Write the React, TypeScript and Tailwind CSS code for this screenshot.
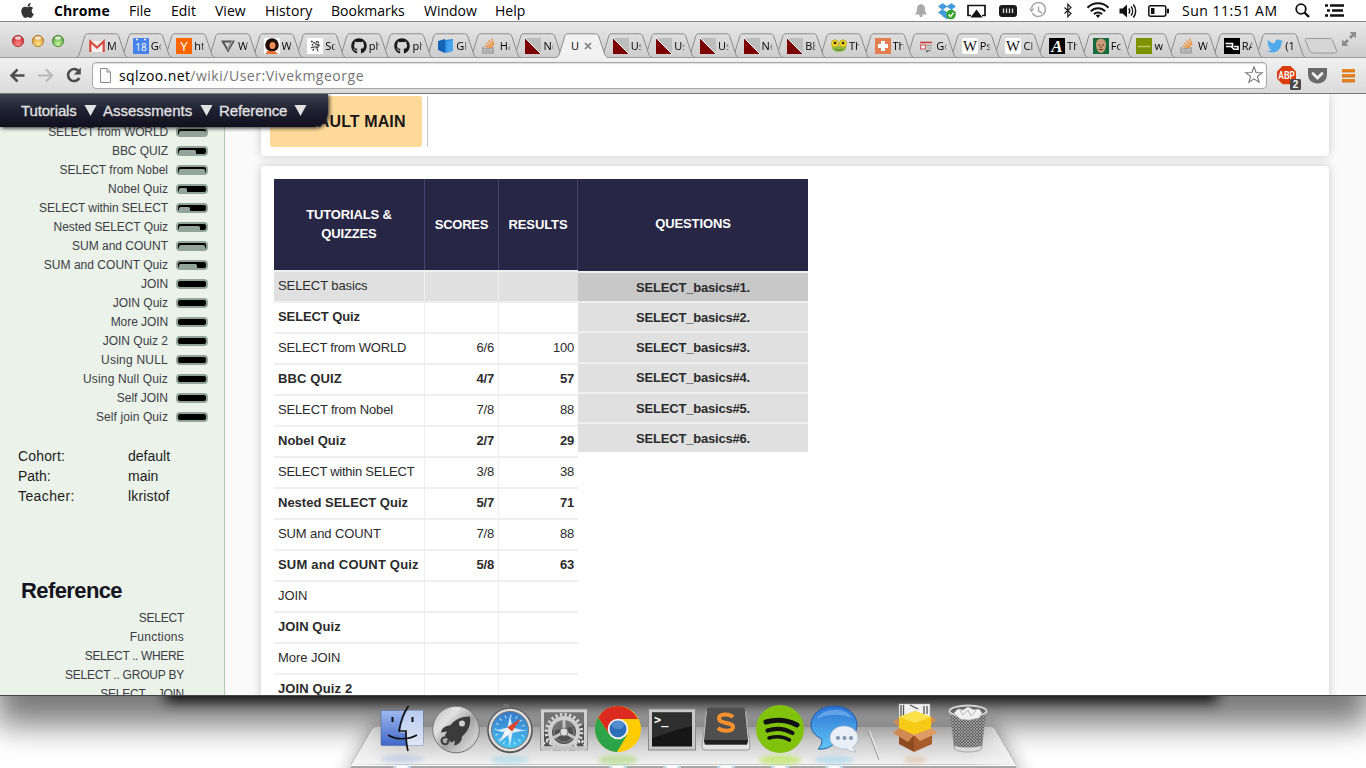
import React from "react";
import { FaApple, FaGithub, FaTwitter } from "react-icons/fa";

/* ---------- Menu bar ---------- */

function StatusIcons() {
  return (
    <svg width="260" height="21" viewBox="912 0 260 21" className="shrink-0">
      <g fill="#a9a9a9">
        <path d="M921 4c-3 .6-4 2.500-4 5 0 3-1 4.500-2.500 5.500h13C926 13.500 925 12 925 9c0-2.500-1-4.400-4-5z" />
        <circle cx="921" cy="15.600" r="1.700" />
      </g>
      <g fill="#3f9de0" stroke="#2b7fc4" strokeWidth=".5">
        <path d="M942.500 3.500l4.500 3-4.500 3-4-3.100zM951.500 3.500l-4.500 3 4.500 3 4-3.100zM942.500 9.500l4.500 3-4.500 3-4-3.100zM951.500 9.500l-4.500 3 4.500 3 4-3.100z" />
        <path d="M942.500 16l4.500-2.800 4.500 2.800-4.500 3z" />
      </g>
      <circle cx="951" cy="14.500" r="4.800" fill="#35a52c" />
      <path d="M948.600 14.600l1.900 2 3-3.800" fill="none" stroke="#fff" strokeWidth="1.400" />
      <path d="M971 15.500h-3V5.500h17v10h-3" fill="none" stroke="#111" strokeWidth="1.700" />
      <path d="M976.500 9.500l6 8h-12z" fill="#111" />
      <rect x="999" y="5" width="18" height="12" rx="3" fill="#1c1c1c" />
      <path d="M1003.500 8.500v4.500M1006.500 8.500v4.500M1009.500 8.500v4.500M1012.500 8.500v4.500" stroke="#ddd" strokeWidth="1.300" />
      <path d="M1031.500 8a7 7 0 1 1 .8 5" fill="none" stroke="#a9a9a9" strokeWidth="1.500" />
      <path d="M1029 8.500h5.500l-3 4z" fill="#a9a9a9" />
      <path d="M1038.500 6.500v4.500l3.500 2" fill="none" stroke="#a9a9a9" strokeWidth="1.500" />
      <path d="M1064.500 7.500l6.500 6-3.200 3.200V4.300l3.200 3.200-6.500 6" fill="none" stroke="#222" strokeWidth="1.200" />
      <g fill="none" stroke="#111" strokeWidth="2">
        <path d="M1087.500 7.800a14.500 14.500 0 0 1 21 0" />
        <path d="M1090.800 11.200a10 10 0 0 1 14.400 0" />
        <path d="M1094 14.300a5.600 5.600 0 0 1 8 0" />
      </g>
      <path d="M1095.800 15.500l2.200 2.500 2.200-2.500a3.200 3.200 0 0 0-4.400 0z" fill="#111" />
      <path d="M1119.500 8.500h3l4.500-4v13l-4.500-4h-3z" fill="#111" />
      <g fill="none" stroke="#111" strokeWidth="1.400">
        <path d="M1128.800 8.500a4 4 0 0 1 0 5M1131 6.500a7 7 0 0 1 0 9M1133.300 4.500a10 10 0 0 1 0 13" />
      </g>
      <rect x="1148.800" y="5.800" width="17" height="10.500" rx="2" fill="none" stroke="#111" strokeWidth="1.500" />
      <rect x="1151" y="8" width="3.500" height="6" fill="#111" />
      <path d="M1167.500 9h1v4h-1z" stroke="#111" fill="#111" />
    </svg>
  );
}

function MenuBar() {
  return (
    <header className="flex h-[21px] shrink-0 items-center bg-white pl-[19px] font-['Open_Sans','Noto_Sans',sans-serif] text-[14px] leading-[21px] text-black">
      <FaApple className="mr-[18px] h-[17px] w-[17px] shrink-0 text-[#333]" />
      <nav className="flex w-[858px] shrink-0">
        <span className="w-[75px] font-bold tracking-[0.1px]">Chrome</span>
        <span className="w-[42px]">File</span>
        <span className="w-[44px]">Edit</span>
        <span className="w-[50px]">View</span>
        <span className="w-[66px] tracking-[0.1px]">History</span>
        <span className="w-[93px]">Bookmarks</span>
        <span className="w-[71px]">Window</span>
        <span>Help</span>
      </nav>
      <StatusIcons />
      <span className="ml-[10px] w-[112px] shrink-0 whitespace-nowrap tracking-[0.52px]">Sun 11:51 AM</span>
      <svg width="54" height="21" viewBox="1294 0 54 21" className="shrink-0">
        <circle cx="1301" cy="9" r="4.800" fill="none" stroke="#111" strokeWidth="1.800" />
        <path d="M1304.500 12.500l4.500 4.500" stroke="#111" strokeWidth="2.400" />
        <path d="M1325 5.500h3M1330 5.500h14M1327 10.500h3M1332 10.500h11M1325 15.500h3M1330 15.500h14" stroke="#111" strokeWidth="2.600" />
      </svg>
    </header>
  );
}

/* ---------- Tabs ---------- */

type Kind =
  | "gmail" | "cal" | "hn" | "tri" | "face" | "sketch" | "github" | "blue" | "so" | "zoo" | "none"
  | "frog" | "plus" | "news" | "wiki" | "a" | "man" | "green" | "ra" | "twitter";

function Favicon({ kind }: { kind: Kind }) {
  if (kind === "github") return <FaGithub className="h-4 w-4 shrink-0 text-[#1b1b1b]" />;
  if (kind === "twitter") return <FaTwitter className="h-4 w-4 shrink-0 text-[#4fa9ea]" />;
  return (
    <svg width="16" height="16" viewBox="0 0 16 16" className="shrink-0">
      {kind === "gmail" && (
        <>
          <path d="M1 3h14v11H1z" fill="#f4f0ef" />
          <path d="M1.300 14V3.500L8 9.500l6.700-6V14" fill="none" stroke="#d8493d" strokeWidth="2.200" />
        </>
      )}
      {kind === "cal" && (
        <>
          <rect width="16" height="16" rx="1" fill="#4582ec" />
          <path d="M3 1.500h2M11 1.500h2" stroke="#fff" strokeWidth="1.500" />
          <text x="8" y="13" textAnchor="middle" fontSize="10" fill="#fff" fontFamily="Open Sans">18</text>
        </>
      )}
      {kind === "hn" && (
        <>
          <rect width="16" height="16" fill="#f60" />
          <text x="8" y="12.500" textAnchor="middle" fontSize="12" fill="#fff" fontFamily="Liberation Sans">Y</text>
        </>
      )}
      {kind === "tri" && (
        <>
          <path d="M1 2.500h14L8 14.500z" fill="#555" />
          <path d="M4.500 4.500h6L7.500 10z" fill="#d4d4d4" />
          <path d="M12.500 2.500L7.500 12" stroke="#d4d4d4" strokeWidth=".8" />
        </>
      )}
      {kind === "face" && (
        <>
          <rect width="16" height="16" fill="#fff" />
          <circle cx="8" cy="7" r="6.800" fill="#210c08" />
          <ellipse cx="8.500" cy="7.500" rx="3" ry="3.500" fill="#ec8f55" />
          <path d="M2 16c0-3 2-4 4-3s5-1 8 3z" fill="#ef6d2e" />
        </>
      )}
      {kind === "sketch" && (
        <>
          <rect width="16" height="16" fill="#fff" />
          <path d="M4 3l3 2 4-2 1 5-2 2 1 4M5 6l2 3-1 4M9 5v6M4 10l2-1M10 7h2" fill="none" stroke="#333" strokeWidth="1.300" strokeDasharray="2 .8" />
        </>
      )}
      {kind === "blue" && (
        <>
          <path d="M0 3l7-2v14l-7-3z" fill="#1764b4" />
          <path d="M7 2l8-1v11l-8 3z" fill="#2e8bdd" />
          <path d="M9 4l6-2v11l-6 2z" fill="#49a5ee" />
        </>
      )}
      {kind === "so" && (
        <>
          <path d="M1 9v6h10V9" fill="none" stroke="#8b8b8b" strokeWidth="1.200" />
          <path d="M2.500 12.800h7M2.500 10.500h7" stroke="#999" strokeWidth="1.300" />
          <path d="M2.800 8l7 1.500M4 5l6.300 3.300M6.500 2.500l4.800 5M9.500.5l2.500 6.500" stroke="#f0913a" strokeWidth="1.300" />
        </>
      )}
      {kind === "zoo" && (
        <>
          <rect width="16" height="16" fill="#bdbdbd" />
          <path d="M0 0l16 16H0z" fill="#7d0000" />
          <path d="M0 0l16 16" stroke="#fff" strokeWidth="1" />
        </>
      )}
      {kind === "frog" && (
        <>
          <path d="M1 8h14c1 3-2 6-7 6s-8-3-7-6z" fill="#8dbb45" />
          <circle cx="4" cy="5.500" r="3.700" fill="#f0d324" stroke="#a99b21" strokeWidth=".6" />
          <circle cx="12" cy="5.500" r="3.700" fill="#f0d324" stroke="#a99b21" strokeWidth=".6" />
          <circle cx="4" cy="5" r="1.300" fill="#222" />
          <circle cx="12" cy="5" r="1.300" fill="#222" />
          <path d="M4 11c2 1.500 6 1.500 8 0" fill="none" stroke="#557a21" />
        </>
      )}
      {kind === "plus" && (
        <>
          <rect width="16" height="16" fill="#e27e4f" />
          <path d="M8 3v10M3 8h10" stroke="#fff" strokeWidth="4" />
        </>
      )}
      {kind === "news" && (
        <>
          <path d="M2 4.500h12" stroke="#c33" strokeWidth="1.500" />
          <path d="M2 7.500h12M9 10h5M9 12.500h4" stroke="#999" strokeWidth="1.200" />
          <rect x="2.500" y="7" width="5" height="4" fill="#eee" stroke="#c55" />
          <path d="M8 15l5-3H8z" fill="#777" />
        </>
      )}
      {kind === "wiki" && (
        <>
          <rect width="16" height="16" rx="2" fill="#fff" />
          <text x="8" y="12.500" textAnchor="middle" fontSize="14" textLength="14" lengthAdjust="spacingAndGlyphs" fill="#111" fontFamily="Liberation Serif">W</text>
        </>
      )}
      {kind === "a" && (
        <>
          <rect width="16" height="16" fill="#000" />
          <text x="8" y="14" textAnchor="middle" fontSize="17" fontStyle="italic" fontWeight="bold" fill="#fff" fontFamily="Liberation Serif">A</text>
        </>
      )}
      {kind === "man" && (
        <>
          <rect width="16" height="16" fill="#156b3d" />
          <path d="M3 6c0-7 10-7 10 0 0 5-2 9-5 9S3 11 3 6z" fill="#c79c76" />
          <path d="M5 7h2M9 7h2M6 11.500h4M8 8v2" stroke="#5c3a25" strokeWidth="1" />
        </>
      )}
      {kind === "green" && (
        <>
          <rect width="16" height="16" fill="#7d9200" />
          <path d="M2 8.500h12" stroke="#cfdc8a" strokeWidth="1.500" strokeDasharray="2 .6" />
        </>
      )}
      {kind === "ra" && (
        <>
          <rect width="16" height="16" fill="#000" />
          <path d="M1.500 5.500h7v3H2M7 8.500l3 2.800h4V8.500h-4" fill="none" stroke="#fff" strokeWidth="1.600" />
        </>
      )}
    </svg>
  );
}

const tabs: { kind: Kind; label: string }[] = [
  { kind: "gmail", label: "M" },
  { kind: "cal", label: "Go" },
  { kind: "hn", label: "ht" },
  { kind: "tri", label: "W" },
  { kind: "face", label: "Wi" },
  { kind: "sketch", label: "Sc" },
  { kind: "github", label: "ph" },
  { kind: "github", label: "ph" },
  { kind: "blue", label: "GF" },
  { kind: "so", label: "Ha" },
  { kind: "zoo", label: "No" },
  { kind: "none", label: "U" },
  { kind: "zoo", label: "Us" },
  { kind: "zoo", label: "Us" },
  { kind: "zoo", label: "Us" },
  { kind: "zoo", label: "No" },
  { kind: "zoo", label: "BE" },
  { kind: "frog", label: "Th" },
  { kind: "plus", label: "Th" },
  { kind: "news", label: "Go" },
  { kind: "wiki", label: "Ps" },
  { kind: "wiki", label: "Cl" },
  { kind: "a", label: "Th" },
  { kind: "man", label: "Fc" },
  { kind: "green", label: "w" },
  { kind: "so", label: "W" },
  { kind: "ra", label: "RA" },
  { kind: "twitter", label: "(1" },
];

function Tab({ kind, label, order }: { kind: Kind; label: string; order: number }) {
  const active = kind === "none";
  return (
    <div className="relative h-[25px] w-[43.65px] shrink-0" style={{ zIndex: active ? 50 : order }}>
      <svg className="absolute top-0 left-0" width="54" height="25" viewBox="0 0 54 25">
        <path
          d="M0 24.500C2.500 24 3 22 4 19L8.500 4C9.200 1.500 10 .8 12 .8H39.500C41.500 .8 42.300 1.500 43 4L48 19C49 22 49.500 24 52 24.500"
          fill={active ? "#f1f1f1" : "url(#tabFill)"}
          stroke="#8c8c8c"
        />
        <path d="M1.500 24.500h49" stroke={active ? "#f1f1f1" : "#9b9b9b"} strokeWidth={active ? 1.5 : 1} />
      </svg>
      <div className="relative flex h-[25px] items-center pt-px pl-[13px]">
        {active ? (
          <>
            <span className="ml-[2px] w-[9px] font-['Open_Sans','Noto_Sans',sans-serif] text-[11px] leading-[16px]">U</span>
            <svg width="8" height="8" viewBox="0 0 8 8" className="ml-[4px]">
              <path d="M1 1l6 6M7 1L1 7" stroke="#808080" strokeWidth="1.700" />
            </svg>
          </>
        ) : (
          <>
            <Favicon kind={kind} />
            <span className="ml-[2px] w-[11px] shrink-0 overflow-hidden [mask-image:linear-gradient(to_right,#000_70%,transparent)] font-['Open_Sans','Noto_Sans',sans-serif] text-[11px] leading-[16px] whitespace-nowrap text-black">
              {label}
            </span>
          </>
        )}
      </div>
    </div>
  );
}

function TabStrip() {
  return (
    <div className="flex h-[37px] shrink-0 items-end border-t border-[#858585] bg-linear-to-b from-[#e9e9e9] to-[#cbcbcb] shadow-[inset_0_-1px_#9b9b9b]">
      <svg width="76" height="36" viewBox="0 0 76 36" className="shrink-0">
        <defs>
          <linearGradient id="tabFill" x1="0" y1="0" x2="0" y2="1">
            <stop offset="0" stopColor="#dedede" />
            <stop offset="1" stopColor="#cdcdcd" />
          </linearGradient>
          <radialGradient id="lr" cx=".5" cy=".75" r=".7"><stop offset="0" stopColor="#ff8b88" /><stop offset="1" stopColor="#c51f26" /></radialGradient>
          <radialGradient id="ly" cx=".5" cy=".75" r=".7"><stop offset="0" stopColor="#ffe48a" /><stop offset="1" stopColor="#d68e25" /></radialGradient>
          <radialGradient id="lg" cx=".5" cy=".75" r=".7"><stop offset="0" stopColor="#c9f5a3" /><stop offset="1" stopColor="#44992f" /></radialGradient>
        </defs>
        <circle cx="18" cy="19" r="5.700" fill="url(#lr)" stroke="#a03535" strokeWidth=".8" />
        <circle cx="38" cy="19" r="5.700" fill="url(#ly)" stroke="#a5742b" strokeWidth=".8" />
        <circle cx="58" cy="19" r="5.700" fill="url(#lg)" stroke="#4c8238" strokeWidth=".8" />
        <ellipse cx="18" cy="16" rx="3.200" ry="1.700" fill="#fff" opacity=".75" />
        <ellipse cx="38" cy="16" rx="3.200" ry="1.700" fill="#fff" opacity=".75" />
        <ellipse cx="58" cy="16" rx="3.200" ry="1.700" fill="#fff" opacity=".75" />
      </svg>
      <div className="relative flex">
        {tabs.map((t, i) => (
          <Tab key={i} kind={t.kind} label={t.label} order={40 - i} />
        ))}
      </div>
      <svg width="68" height="36" viewBox="1298 22 68 36" className="shrink-0">
        <path d="M1307 38.500h22c2 0 3 .5 3.800 2.500l3.500 9c.8 2 .2 3-1.800 3h-21c-2 0-3-.5-3.800-2.500l-4-9c-.8-2-.5-3 1.300-3z" fill="#d6d6d6" stroke="#999" />
        <path d="M1349.500 32h6.500v6.500l-2.200-2.200-2.800 2.800-2-2 2.800-2.800zM1348.500 46h-6.500v-6.500l2.200 2.200 2.800-2.800 2 2-2.800 2.800z" fill="#8c8c8c" />
      </svg>
    </div>
  );
}

function Toolbar() {
  return (
    <div className="flex h-[36px] shrink-0 items-center border-b border-[#777] bg-linear-to-b from-[#f1f1f1] to-[#dadada]">
      <svg width="92" height="35" viewBox="0 58 92 35" className="shrink-0">
        <path d="M24.500 75.500H12M17.500 69.500l-6 6 6 6" fill="none" stroke="#4d4d4d" strokeWidth="2.500" />
        <path d="M38 75.500h13M46 69.500l6 6-6 6" fill="none" stroke="#b9b9b9" strokeWidth="2.200" />
        <path d="M78.500 71a6 6 0 1 0 .8 7" fill="none" stroke="#4d4d4d" strokeWidth="2.600" />
        <path d="M80.800 67.500v7h-7z" fill="#4d4d4d" />
      </svg>
      <div className="mb-[1px] flex h-[27px] w-[1175px] shrink-0 items-center rounded-[4px] border border-[#a9a9a9] bg-white shadow-[inset_0_1px_1px_#ddd]">
        <svg width="11" height="15" viewBox="0 0 11 15" className="ml-[7px] shrink-0">
          <path d="M.5.5H7L10.500 4V14.500H.5z M7 .5V4h3.500" fill="#fafafa" stroke="#8c8c8c" />
        </svg>
        <span className="ml-[8px] flex-1 pt-px font-['Open_Sans','Noto_Sans',sans-serif] text-[14px] leading-[20px] text-[#757575]">
          <span className="tracking-[0.4px] text-black">sqlzoo.net</span>
          <span className="tracking-[0.52px]">/wiki/User:Vivekmgeorge</span>
        </span>
        <svg width="20" height="20" viewBox="0 0 20 20" className="mr-[2px] shrink-0">
          <path d="M10 1.800l2.100 5.700 6.100.2-4.800 3.700 1.700 5.800L10 13.800l-5.100 3.400 1.700-5.800L1.800 7.700l6.100-.2z" fill="#fff" stroke="#777" strokeWidth="1.100" />
        </svg>
      </div>
      <svg width="99" height="35" viewBox="1267 58 99 35" className="shrink-0">
        <path d="M1282.500 66h8l5.500 5.500v7l-5.500 5.800h-8l-5.500-5.800v-7z" fill="#dc3c0a" />
        <text x="1286.500" y="79" textAnchor="middle" fontSize="10" fontWeight="bold" textLength="16.500" lengthAdjust="spacingAndGlyphs" fill="#fff" fontFamily="Liberation Sans">ABP</text>
        <rect x="1290" y="79" width="11" height="11" rx="1.500" fill="#484848" />
        <text x="1295.500" y="88.300" textAnchor="middle" fontSize="10" fontWeight="bold" fill="#fff" fontFamily="Liberation Sans">2</text>
        <path d="M1308 68h19v6c0 6-4 9.500-9.500 9.500s-9.500-3.500-9.500-9.500z" fill="#6a6a6a" />
        <path d="M1313 73.500l4.500 4.500 4.500-4.500" fill="none" stroke="#eee" strokeWidth="2.800" strokeLinecap="round" />
        <path d="M1342 70.500h13M1342 75.500h13M1342 80.500h13" stroke="#e8831d" strokeWidth="3" />
        <path d="M1342 72h13M1342 77h13M1342 82h13" stroke="#b96412" strokeWidth=".7" />
      </svg>
    </div>
  );
}

/* ---------- Page ---------- */

const progress: [string, number, string][] = [
  ["SELECT from WORLD", 27, "tracking-[-0.12px]"],
  ["BBC QUIZ", 17, "tracking-[-0.08px]"],
  ["SELECT from Nobel", 26, "tracking-[0px]"],
  ["Nobel Quiz", 8, "tracking-[0.07px]"],
  ["SELECT within SELECT", 11, "tracking-[-0.08px]"],
  ["Nested SELECT Quiz", 21, "tracking-[-0.08px]"],
  ["SUM and COUNT", 26, "tracking-[0px]"],
  ["SUM and COUNT Quiz", 18, "tracking-[0.02px]"],
  ["JOIN", 0, "tracking-[-0.08px]"],
  ["JOIN Quiz", 0, "tracking-[0px]"],
  ["More JOIN", 0, "tracking-[-0.08px]"],
  ["JOIN Quiz 2", 0, "tracking-[0px]"],
  ["Using NULL", 0, "tracking-[0.22px]"],
  ["Using Null Quiz", 0, "tracking-[0.15px]"],
  ["Self JOIN", 0, "tracking-[-0.02px]"],
  ["Self join Quiz", 0, "tracking-[0.1px]"],
];

function Sidebar() {
  return (
    <aside className="h-[601px] w-[225px] shrink-0 overflow-hidden border-r border-[#b5c9b5] bg-[#eaf2ea] pt-[28px]">
      <ul className="pr-[16px]">
        {progress.map(([name, w, tracking]) => (
          <li key={name} className="flex h-[19px] items-center justify-end text-[12px] text-[#3c3c44]">
            <span className={tracking}>{name}</span>
            <span className="ml-[8px] h-[10px] w-[32px] rounded-[4px] border-2 border-[#93a59a] bg-black">
              <span className="mt-[2px] ml-px block h-[5px] rounded-[1.500px] bg-[#93a59a]" style={{ width: w }} />
            </span>
          </li>
        ))}
      </ul>
      <dl className="mt-[20px] grid grid-cols-[110px_1fr] pl-[18px] text-[14px] leading-[20px] text-[#1c1c1c]">
        <dt className="tracking-[0.15px]">Cohort:</dt>
        <dd>default</dd>
        <dt>Path:</dt>
        <dd>main</dd>
        <dt className="tracking-[0.4px]">Teacher:</dt>
        <dd className="tracking-[0.15px]">lkristof</dd>
      </dl>
      <h3 className="mt-[71px] pl-[21px] text-[22px] leading-[28px] font-bold tracking-[-0.6px] text-[#14141f]">Reference</h3>
      <ul className="mt-[4px] pr-[40px] text-right text-[12px] leading-[19px] text-[#3c3c44]">
        <li className="tracking-[-0.25px]">SELECT</li>
        <li className="tracking-[0.25px]">Functions</li>
        <li className="tracking-[-0.35px]">SELECT .. WHERE</li>
        <li className="tracking-[-0.22px]">SELECT .. GROUP BY</li>
        <li className="tracking-[-0.25px]">SELECT .. JOIN</li>
      </ul>
    </aside>
  );
}

const rows: [string, string, string, string][] = [
  ["SELECT basics", "", "", "tracking-[-0.1px]"],
  ["SELECT Quiz", "", "", "tracking-[-0.1px]"],
  ["SELECT from WORLD", "6/6", "100", "tracking-[-0.23px]"],
  ["BBC QUIZ", "4/7", "57", "tracking-[0.12px]"],
  ["SELECT from Nobel", "7/8", "88", "tracking-[-0.15px]"],
  ["Nobel Quiz", "2/7", "29", "tracking-[0px]"],
  ["SELECT within SELECT", "3/8", "38", "tracking-[-0.25px]"],
  ["Nested SELECT Quiz", "5/7", "71", "tracking-[0px]"],
  ["SUM and COUNT", "7/8", "88", "tracking-[-0.1px]"],
  ["SUM and COUNT Quiz", "5/8", "63", "tracking-[0.2px]"],
  ["JOIN", "", "", "tracking-[-0.1px]"],
  ["JOIN Quiz", "", "", "tracking-[0.08px]"],
  ["More JOIN", "", "", "tracking-[-0.05px]"],
  ["JOIN Quiz 2", "", "", "tracking-[0.12px]"],
];

function ScoreTable() {
  return (
    <div className="w-[304px] shrink-0">
      <div className="grid h-[91px] grid-cols-[150px_74px_80px] bg-[#282645] text-center text-[13px] leading-[19px] font-bold text-white">
        <div className="px-6 pt-[26px] tracking-[-0.15px]">
          TUTORIALS & <span className="tracking-[-0.15px]">QUIZZES</span>
        </div>
        <div className="flex items-center justify-center border-l border-[#45436b] tracking-[-0.25px]">SCORES</div>
        <div className="flex items-center justify-center border-x border-[#45436b] tracking-[-0.05px]">
          <span className="tracking-[-0.1px]">RESULTS</span>
        </div>
      </div>
      {rows.map(([name, score, result, tracking], i) => (
        <div
          key={name}
          className={`grid h-[31px] grid-cols-[150px_74px_80px] border-t-2 border-[#efefef] text-[13px] leading-[27px] whitespace-nowrap text-[#2b2b2b] ${i === 0 ? "bg-[#e0e0e0]" : ""} ${i % 2 ? "font-bold" : ""}`}
        >
          <div className={`pl-[4px] ${tracking}`}>{name}</div>
          <div className="border-l border-[#efefef] pr-[4px] text-right tracking-[-0.15px]">{score}</div>
          <div className="border-l border-[#efefef] pr-[4px] text-right tracking-[-0.2px]">{result}</div>
        </div>
      ))}
    </div>
  );
}

function Questions() {
  return (
    <div className="w-[230px] shrink-0">
      <div className="flex h-[92px] items-center justify-center bg-[#282645] pb-[3px] text-[13px] font-bold tracking-[-0.12px] text-white">QUESTIONS</div>
      {[1, 2, 3, 4, 5, 6].map((n) => (
        <div
          key={n}
          className={`flex h-[30.200px] items-center justify-center border-t-2 border-[#efefef] pt-px text-[13px] font-bold tracking-[-0.2px] text-[#2b2b2b] ${n === 1 ? "bg-[#c8c8c8]" : "bg-[#e0e0e0]"}`}
        >
          SELECT_basics#{n}.
        </div>
      ))}
    </div>
  );
}

function Page() {
  return (
    <main className="relative flex h-[601px] shrink-0 overflow-hidden bg-[#fafafa] font-['Liberation_Sans',Arial,sans-serif]">
      <Sidebar />
      <div className="ml-[36px] flex w-[1068px] shrink-0 flex-col gap-[10px]">
        <section className="flex h-[62px] shrink-0 rounded-b-[4px] bg-white pt-[2px] pl-[9px] shadow-[0_0_10px_#c8c8c8]">
          <div className="flex h-[51px] w-[152px] items-center justify-center rounded-[3px] bg-[#fed998] pt-px text-[16px] font-bold text-[#1b1717]">
            <span className="tracking-[0.1px]">DEFAULT MAIN</span>
          </div>
          <div className="ml-[5px] h-[51px] w-px bg-[#c8c8c8]" />
        </section>
        <section className="flex h-[560px] shrink-0 items-start rounded-t-[4px] bg-white pt-[13px] pl-[13px] shadow-[0_0_10px_#c8c8c8]">
          <ScoreTable />
          <Questions />
        </section>
      </div>
      <nav className="absolute top-0 left-0 flex h-[33px] w-[328px] items-center rounded-br-[14px] bg-linear-to-b from-[#3b434f] via-[#1f2030] to-[#12101f] pt-px pl-[21px] text-[15px] text-[#e2e2e2] shadow-[1px_1px_4px_#222]">
        {[
          ["Tutorials", "w-[64px] tracking-[-0.15px]"],
          ["Assessments", "w-[98px] tracking-[0px]"],
          ["Reference", "w-[76px] tracking-[-0.1px]"],
        ].map(([label, w]) => (
          <span key={label} className="flex items-center">
            <span className={`${w} [-webkit-text-stroke:0.3px_#e2e2e2]`}>{label}</span>
            <svg width="12" height="11" viewBox="0 0 12 11" className="mr-[6px] mb-[2px] -ml-px w-[13px]">
              <path d="M0 0h12L6 11z" fill="#e2e2e2" />
            </svg>
          </span>
        ))}
      </nav>
    </main>
  );
}

/* ---------- Desktop and dock ---------- */

function Backdrop() {
  return (
    <svg className="absolute inset-0" width="1366" height="73" viewBox="0 695 1366 73">
      <defs>
        <filter id="b16" filterUnits="userSpaceOnUse" x="-100" y="500" width="1600" height="400"><feGaussianBlur stdDeviation="16" /></filter>
        <filter id="b7" filterUnits="userSpaceOnUse" x="-100" y="500" width="1600" height="400"><feGaussianBlur stdDeviation="7" /></filter>
        <filter id="b12" filterUnits="userSpaceOnUse" x="-100" y="500" width="1600" height="400"><feGaussianBlur stdDeviation="11" /></filter>
        <filter id="glow" filterUnits="userSpaceOnUse" x="340" y="740" width="700" height="40"><feGaussianBlur stdDeviation="2" /></filter>
        <linearGradient id="shelf" x1="0" y1="0" x2="0" y2="1">
          <stop offset="0" stopColor="#a2a2a2" />
          <stop offset=".4" stopColor="#cbcbcb" />
          <stop offset="1" stopColor="#f4f4f4" />
        </linearGradient>
        <linearGradient id="shelfEdge" x1="0" y1="0" x2="1" y2="0">
          <stop offset="0" stopColor="#f4f4f4" stopOpacity=".95" />
          <stop offset=".07" stopColor="#f4f4f4" stopOpacity="0" />
          <stop offset=".93" stopColor="#f4f4f4" stopOpacity="0" />
          <stop offset="1" stopColor="#f4f4f4" stopOpacity=".95" />
        </linearGradient>
      </defs>
      <rect x="0" y="695" width="1366" height="73" fill="#fff" />
      <rect x="-4" y="520" width="1374" height="204" fill="#000" opacity=".52" filter="url(#b16)" />
      <path d="M376 724H992L1022 790H346z" fill="#000" opacity=".5" filter="url(#b12)" />
      <rect x="165" y="600" width="1052" height="101" fill="#000" opacity=".88" filter="url(#b7)" />
      <path d="M378 725.500H990Q993 725.500 995 728L1016 764H351L372 728Q374 725.500 378 725.500z" fill="url(#shelf)" stroke="#888" strokeWidth=".8" />
      <path d="M378 725.500H990Q993 725.500 995 728L1016 764H351L372 728Q374 725.500 378 725.500z" fill="url(#shelfEdge)" />
      <path d="M351 764H1016V766Q1016 768 1014 768H353Q351 768 351 766z" fill="#a6a6a6" />
      <path d="M351 764.500H1016" stroke="#fff" />
      <path d="M868 730l11 29" stroke="#999" />
      <path d="M869.500 730l11 29" stroke="#eee" />
      <g filter="url(#glow)">
        <ellipse cx="402" cy="758" rx="22" ry="4" fill="#8da6e0" opacity=".35" />
        <ellipse cx="510" cy="759" rx="20" ry="4" fill="#7ecbe8" opacity=".4" />
        <ellipse cx="618" cy="759" rx="20" ry="5" fill="#a3d76c" opacity=".55" />
        <ellipse cx="780" cy="759" rx="21" ry="5" fill="#bce55b" opacity=".7" />
        <ellipse cx="834" cy="759" rx="20" ry="4" fill="#80cdf0" opacity=".45" />
        <ellipse cx="915" cy="759" rx="12" ry="4" fill="#d8a06c" opacity=".35" />
      </g>
      {[402, 618, 672, 726, 780, 834].map((x) => (
        <g key={x}>
          <rect x={x - 9} y="764.500" width="18" height="4" rx="2" fill="#c3e6f8" opacity=".8" />
          <rect x={x - 5.5} y="765" width="11" height="3" fill="#fff" />
        </g>
      ))}
    </svg>
  );
}

function DockIcon({ name }: { name: string }) {
  return (
    <svg width="54" height="58" viewBox="0 0 54 58" className="shrink-0">
      {name === "finder" && (
        <>
          <defs>
            <linearGradient id="fa" x1="0" y1="0" x2="0" y2="1"><stop offset="0" stopColor="#9fb9ee" /><stop offset="1" stopColor="#3f66c9" /></linearGradient>
            <linearGradient id="fb" x1="0" y1="0" x2="0" y2="1"><stop offset="0" stopColor="#b9cbf2" /><stop offset="1" stopColor="#e0e6f5" /></linearGradient>
          </defs>
          <rect x="6" y="8.500" width="42" height="35" rx="1" fill="url(#fa)" stroke="#526b9c" strokeWidth=".6" />
          <path d="M33 8.500h15v35H32l-1-13h-6c1-8 4-16 8-22z" fill="url(#fb)" />
          <path d="M33.500 4c-6 8-8 16-9.500 25h7c0 7 0 13 2 20" fill="none" stroke="#111" strokeWidth="1.700" />
          <path d="M13 33c8 5 20 5 29 0" fill="none" stroke="#111" strokeWidth="1.700" />
          <path d="M17.500 15v5M37.500 15v5" stroke="#111" strokeWidth="2" />
        </>
      )}
      {name === "launchpad" && (
        <g transform="translate(0 1.500)">
          <defs>
            <linearGradient id="lp" x1="0" y1="0" x2="1" y2="1"><stop offset="0" stopColor="#bbb" /><stop offset=".3" stopColor="#e2e2e2" /><stop offset=".55" stopColor="#a2a2a2" /><stop offset=".8" stopColor="#d0d0d0" /><stop offset="1" stopColor="#a0a0a0" /></linearGradient>
          </defs>
          <circle cx="27" cy="26" r="23.300" fill="url(#lp)" stroke="#777" />
          <path d="M41 13c-9 0-15 3-20 9-4 0-8 2-9 7l6-1-2 4 6 7 4-2-1 5c5-1 8-4 8-9 6-5 9-11 8-20z" fill="#3b3b3b" />
          <circle cx="33" cy="20" r="3" fill="#cfcfcf" />
          <path d="M18 34c-5-1-7 3-4 6 3 2 6 0 5-4" fill="none" stroke="#3b3b3b" strokeWidth="2" />
        </g>
      )}
      {name === "safari" && (
        <g transform="translate(0 .5)">
          <defs>
            <linearGradient id="sf" x1="0" y1="0" x2="0" y2="1"><stop offset="0" stopColor="#3778c9" /><stop offset="1" stopColor="#45c5f3" /></linearGradient>
          </defs>
          <circle cx="23" cy="4" r="2" fill="none" stroke="#777" strokeWidth="1.500" />
          <circle cx="27" cy="28" r="22.800" fill="#555" />
          <circle cx="27" cy="27.500" r="21.300" fill="#ddd" />
          <circle cx="27" cy="27.500" r="18.500" fill="url(#sf)" stroke="#777" />
          <circle cx="27" cy="27.500" r="14" fill="none" stroke="#bfe3fa" strokeWidth="3" strokeDasharray="1 4.500" />
          <path d="M27 13l2.500 12L41 28l-11.500 2.500L27 43l-2.500-12.500L13 28l11.500-3z" fill="#d6ecfa" />
          <path d="M38 16L24 25l5 4z" fill="#df4426" />
          <path d="M16 40l8-15 5 4z" fill="#f4f4f4" />
        </g>
      )}
      {name === "prefs" && (
        <>
          <rect x="3.500" y="7" width="47" height="41" fill="#d0d0d0" stroke="#888" />
          <rect x="7" y="10.500" width="40" height="34" fill="#505050" />
          <path d="M7 10.500h40v12L7 30z" fill="#888" opacity=".6" />
          <circle cx="27" cy="30" r="17.500" fill="none" stroke="#d5d5d5" strokeWidth="3.500" strokeDasharray="2.300 2.280" />
          <circle cx="27" cy="30" r="14" fill="none" stroke="#cfcfcf" strokeWidth="4" />
          <circle cx="27" cy="30" r="10" fill="none" stroke="#777" strokeWidth="1.500" />
          <path d="M27 30V18M27 30l11 6M27 30l-11 6" stroke="#c6c6c6" strokeWidth="3" />
          <circle cx="27" cy="30" r="4" fill="#ddd" stroke="#777" />
          <circle cx="11" cy="44" r="5" fill="none" stroke="#ddd" strokeWidth="3" strokeDasharray="2 1.500" />
          <circle cx="43" cy="44" r="5" fill="none" stroke="#ddd" strokeWidth="3" strokeDasharray="2 1.500" />
          <path d="M3.500 44.500h47v3.500h-47z" fill="#c3c3c3" />
        </>
      )}
      {name === "chrome" && (
        <g transform="translate(0 1)">
          <circle cx="27" cy="26" r="23" fill="#fc0" />
          <path d="M27 3a23 23 0 0 1 20 13H27l-9 15L7.080 14.500A23 23 0 0 1 27 3z" fill="#dd2a21" />
          <path d="M7.080 14.500A23 23 0 0 0 26 49l10-17-9 4-9-5z" fill="#2ea44a" />
          <circle cx="27" cy="26" r="10.300" fill="#f4f4f4" />
          <circle cx="27" cy="26" r="8.500" fill="#2f6eb8" />
          <ellipse cx="27" cy="22" rx="6" ry="4" fill="#6fa3df" opacity=".6" />
        </g>
      )}
      {name === "terminal" && (
        <>
          <rect x="3.500" y="7" width="47" height="41" fill="#c8c8c8" stroke="#888" />
          <rect x="7" y="10.500" width="40" height="34" fill="#161616" />
          <path d="M7 36c14-4 28-10 40-12V10.500H7z" fill="#2e2e2e" />
          <text x="9" y="22" fontSize="12" fontWeight="bold" fill="#fff" fontFamily="DejaVu Sans Mono">&gt;_</text>
        </>
      )}
      {name === "sublime" && (
        <g transform="translate(0 -1)">
          <path d="M7 10h40l4 36q0 3-3 3H6q-3 0-3-3z" fill="#e4e4e4" stroke="#999" />
          <path d="M10 6.500h34q2 0 2 2l3 31-1 4H6l-1-4 3-31q0-2 2-2z" fill="#4f4f4f" />
          <path d="M5 39h44l-1 4.500H6z" fill="#1f1f1f" />
          <path d="M34 16c-4-3.500-14-3.500-14 1.500 0 5.500 14 3.500 14 8.500 0 5-11 4.500-15 1" fill="none" stroke="#f7912d" strokeWidth="4" />
        </g>
      )}
      {name === "spotify" && (
        <g transform="translate(0 1)">
          <circle cx="27" cy="26" r="24" fill="#81c20d" />
          <path d="M13 19c11-3 21-2 31 3" fill="none" stroke="#111" strokeWidth="5" strokeLinecap="round" />
          <path d="M14.500 27.500c9-3 17-2 25 2.500" fill="none" stroke="#111" strokeWidth="4.200" strokeLinecap="round" />
          <path d="M16 35c7-2 14-2 20.500 2" fill="none" stroke="#111" strokeWidth="3.500" strokeLinecap="round" />
        </g>
      )}
      {name === "messages" && (
        <>
          <defs>
            <linearGradient id="ms" x1="0" y1="0" x2="0" y2="1"><stop offset="0" stopColor="#2b73d4" /><stop offset="1" stopColor="#61c6f6" /></linearGradient>
          </defs>
          <path d="M27 4c13 0 23 8 23 19S40 41 28 41c-3 3-9 7-17 6 3-2 4-6 4-10C8 34 4 29 4 23 4 12 14 4 27 4z" fill="url(#ms)" stroke="#245ba8" />
          <path d="M10 17C13 7 38 3 45 16 34 11 19 12 10 17z" fill="#9ccdf5" opacity=".45" />
          <path d="M37 24c8 0 14 5 14 12 0 4-2 7-5 9 0 2 1 3 3 5-4 0-7-1-9-3-9 1-17-4-17-11s6-12 14-12z" fill="#e9eff6" stroke="#a5b4c4" strokeWidth=".7" />
          <circle cx="31" cy="36" r="2" fill="#8195ab" />
          <circle cx="37.500" cy="36" r="2" fill="#8195ab" />
          <circle cx="44" cy="36" r="2" fill="#8195ab" />
        </>
      )}
      {name === "box" && (
        <>
          <path d="M12 2h31v18H12z" fill="#f1f1f1" stroke="#aaa" strokeWidth=".5" />
          <path d="M14 3v12M16.500 3v14M40 4v8M37 4v8M23 3l8 4" stroke="#555" strokeWidth="1.300" />
          <path d="M12 27l15 7v16l-15-8z" fill="#8e4c22" />
          <path d="M45 27l-18 7v16l18-8z" fill="#a65c2c" />
          <path d="M11 16l-5 4 6 5zM44 14l5 4-5 5z" fill="#cf8a52" />
          <path d="M12 15l16-6 16 6v13l-17 5-15-6z" fill="#f5cb18" />
          <path d="M12 15l16-6 16 6-16 6z" fill="#fbe04a" />
          <path d="M12 26l15 7-6 7-15-9z" fill="#d08a53" />
          <path d="M45 26l-18 7 6 6 17-8z" fill="#dd9b66" />
        </>
      )}
      {name === "trash" && (
        <>
          <defs>
            <pattern id="mesh" width="3" height="3" patternUnits="userSpaceOnUse">
              <rect width="3" height="3" fill="#5e5e5e" />
              <path d="M0 0l3 3M3 0L0 3" stroke="#bdbdbd" strokeWidth=".6" />
            </pattern>
          </defs>
          <path d="M9 9h36l-4 37c-2 4-26 4-28 0z" fill="url(#mesh)" />
          <path d="M13 43c4 3 24 3 28 0l-.4 4c-3 4-24 4-27 0z" fill="#d9d9d9" stroke="#888" strokeWidth=".6" />
          <ellipse cx="27" cy="9" rx="18.500" ry="5.500" fill="#666" stroke="#d2d2d2" strokeWidth="2" />
          <path d="M13 11l4-4 5 1 5-3 6 3 5-1 3 4-3 5-10 2-9-1z" fill="#f0f0f0" stroke="#bbb" strokeWidth=".7" />
          <path d="M19 8l3 5 5-5 3 6 5-5" fill="none" stroke="#b5b5b5" />
        </>
      )}
    </svg>
  );
}

function Dock() {
  return (
    <footer className="relative h-[73px] shrink-0 overflow-hidden border-t border-[#444]">
      <Backdrop />
      <div className="relative flex pt-[6px] pl-[375px]">
        {["finder", "launchpad", "safari", "prefs", "chrome", "terminal", "sublime", "spotify", "messages"].map((n) => (
          <DockIcon key={n} name={n} />
        ))}
        <div className="ml-[26px] flex">
          <DockIcon name="box" />
          <DockIcon name="trash" />
        </div>
      </div>
    </footer>
  );
}

export default function App() {
  return (
    <div className="flex h-[768px] w-[1366px] flex-col overflow-hidden bg-white">
      <MenuBar />
      <TabStrip />
      <Toolbar />
      <Page />
      <Dock />
    </div>
  );
}
